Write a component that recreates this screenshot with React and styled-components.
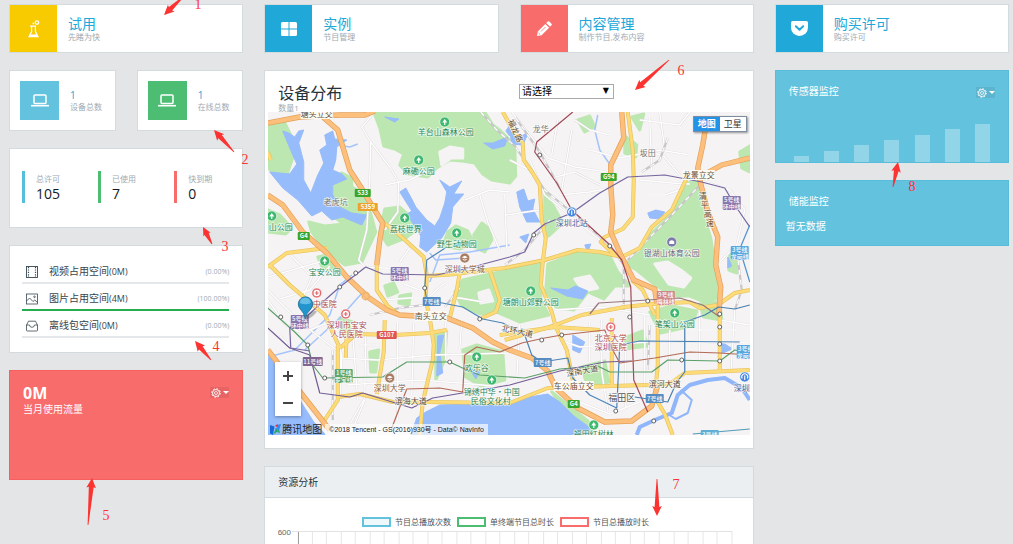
import React from "react";
import styled, { createGlobalStyle } from "styled-components";

const GlobalStyle = createGlobalStyle`
  *, *::before, *::after { box-sizing: border-box; }
  body {
    margin: 0;
    background: #e4e5e6;
    color: #263238;
    font-family: "Open Sans", "Noto Sans CJK SC", sans-serif;
    font-size: 10px;
    line-height: 14px;
  }
  button, select { font: inherit; color: inherit; margin: 0; padding: 0; border: 0; }
  svg { display: block; }
`;

const colors = {
  blue: "#20a8d8",
  sky: "#63c2de",
  green: "#4dbd74",
  red: "#f86c6b",
  yellow: "#f8cb00",
  muted: "#9eaab3",
  border: "#d3dbdf",
};

/* ---------- layout ---------- */

const Page = styled.div`
  position: relative;
  height: 100vh;
  overflow: hidden;
  padding: 4px 4px 0 9px;
`;
const TopRow = styled.nav`
  display: grid;
  grid-template-columns: repeat(4, 1fr);
  gap: 21px;
  margin-bottom: 17px;
`;
const Columns = styled.main`
  display: grid;
  grid-template-columns: repeat(4, 1fr);
  gap: 21px;
  align-items: start;
`;
const Column = styled.div`
  display: flex;
  flex-direction: column;
  gap: 17px;
  min-width: 0;
  grid-column: span ${(p) => p.$span || 1};
`;
const Card = styled.section`
  background: #fff;
  border: 1px solid ${colors.border};
`;

/* ---------- top tiles ---------- */

const Tile = styled.a`
  display: flex;
  background: #fff;
  border: 1px solid ${colors.border};
  color: inherit;
  text-decoration: none;
`;
const TileIcon = styled.span`
  display: flex;
  flex: none;
  width: 47px;
  align-items: center;
  justify-content: center;
  background: ${(p) => p.$color};
`;
const TileText = styled.span`
  display: block;
  padding: 10px 11px 11px;
`;
const TileTitle = styled.span`
  display: block;
  font-size: 14px;
  line-height: 17px;
  color: ${colors.blue};
`;
const Caption = styled.span`
  display: block;
  font-size: 8px;
  line-height: ${(p) => p.$line || 9}px;
  color: ${colors.muted};
  white-space: nowrap;
`;

/* ---------- left column ---------- */

const MiniRow = styled.div`
  display: grid;
  grid-template-columns: 1fr 1fr;
  gap: 21px;
`;
const Mini = styled(Card)`
  display: flex;
  align-items: center;
  gap: 11px;
  padding: 10px;
`;
const MiniIcon = styled.span`
  display: flex;
  flex: none;
  width: 39px;
  height: 39px;
  align-items: center;
  justify-content: center;
  background: ${(p) => p.$color};
`;
const MiniValue = styled.span`
  display: block;
  line-height: 12px;
  color: ${colors.blue};
`;
const Stats = styled(Card)`
  display: grid;
  grid-template-columns: repeat(3, 1fr);
  gap: 21px;
  padding: 22px 13px 24px 12px;
`;
const Stat = styled.div`
  border-left: 3px solid ${(p) => p.$color};
  padding: 2px 0 0 11px;
`;
const StatValue = styled.span`
  display: block;
  font-size: 14px;
  line-height: 18px;
  color: #151b1e;
`;
const Storage = styled(Card)`
  display: flex;
  flex-direction: column;
  gap: 4px;
  padding: 15px 13px 14px 12px;
`;
const StorageHead = styled.div`
  display: flex;
  align-items: center;
  height: 21px;
  padding-left: 4px;
`;
const StorageName = styled.span`
  flex: 1;
  margin-left: 11px;
  color: #37444b;
  small { font-size: 9px; }
`;
const StoragePercent = styled.span`
  font-size: 7px;
  color: ${colors.muted};
`;
const Track = styled.div`
  height: 2px;
  background: #e4e8eb;
`;
const Fill = styled.div`
  height: 2px;
  background: #26ad4e;
`;

/* ---------- coloured panels ---------- */

const Panel = styled.section`
  background: ${(p) => p.$color};
  border: 1px solid ${(p) => p.$edge};
  color: #fff;
`;
const PanelHead = styled.div`
  display: flex;
  justify-content: space-between;
  align-items: flex-start;
  padding: 13px 13px 0;
`;
const TrafficPanel = styled(Panel)`
  min-height: 110px;
`;
const TrafficValue = styled.div`
  font-size: 16px;
  line-height: 19px;
  font-weight: 700;
`;
const TrafficLabel = styled.div`
  line-height: 12px;
`;
const PanelTitle = styled.h2`
  margin: 0;
  font-size: 10px;
  line-height: 14px;
  font-weight: 400;
`;
const MenuButton = styled.button`
  display: flex;
  align-items: center;
  justify-content: center;
  gap: 2px;
  width: 19px;
  height: 11px;
  margin-top: 3px;
  background: rgba(0, 0, 0, 0.07);
  color: #fff;
`;
const Caret = styled.span`
  border: 3px solid transparent;
  border-top-color: #fff;
  border-bottom: 0;
`;
const Bars = styled.div`
  display: flex;
  justify-content: space-between;
  align-items: flex-end;
  height: 38px;
  margin: 26px 18px 0;
`;
const Bar = styled.span`
  width: 15px;
  background: rgba(255, 255, 255, 0.3);
`;
const EmptyText = styled.p`
  margin: 0;
  padding: 11px 10px 12px;
`;

/* ---------- device map ---------- */

const MapCard = styled(Card)`
  padding: 12px 3px 13px;
`;
const MapHead = styled.div`
  display: grid;
  grid-template-columns: 1fr 1fr;
  gap: 20px;
  padding: 0 10px;
`;
const MapTitle = styled.h1`
  margin: 0;
  font-size: 16px;
  line-height: 20px;
  font-weight: 400;
`;
const SelectBox = styled.label`
  position: relative;
  display: block;
  justify-self: start;
  width: 95px;
  height: 15px;
  margin-top: 1px;
  color: #000;
`;
const Select = styled.select`
  appearance: none;
  width: 100%;
  height: 15px;
  padding: 0 2px;
  background: #fff;
  border: 1px solid #a9a9a9;
  border-radius: 0;
  line-height: 13px;
`;
const SelectArrow = styled.span`
  position: absolute;
  right: 5px;
  top: 0;
  font-family: "DejaVu Sans", sans-serif;
  font-size: 8px;
  line-height: 14px;
  pointer-events: none;
`;
const MapArea = styled.div`
  position: relative;
  height: 323px;
  overflow: hidden;
  background: #f5f3f4;
`;
const MapSwitch = styled.div`
  position: absolute;
  top: 4px;
  right: 3px;
  display: flex;
  border: 1px solid #7d8ea3;
  box-shadow: 1px 1px 2px rgba(0, 0, 0, 0.4);
`;
const SwitchButton = styled.button`
  width: 26px;
  height: 14px;
  font-size: 9px;
  line-height: 14px;
  font-weight: ${(p) => (p.$active ? 700 : 400)};
  background: ${(p) => (p.$active ? "#2492e6" : "#fff")};
  color: ${(p) => (p.$active ? "#fff" : "#333")};
`;
const ZoomControl = styled.div`
  position: absolute;
  left: 7px;
  bottom: 19px;
  background: #fff;
  box-shadow: 0 1px 3px rgba(0, 0, 0, 0.35);
`;
const ZoomButton = styled.button`
  display: flex;
  align-items: center;
  justify-content: center;
  width: 26px;
  height: 27px;
  background: #fff;
`;
const MapCredit = styled.div`
  position: absolute;
  left: 2px;
  bottom: 0;
  display: flex;
  align-items: center;
  gap: 1px;
  color: #222;
  line-height: 11px;
  height: 11px;
`;
const Copyright = styled.span`
  margin-left: 2px;
  padding: 0 4px;
  background: rgba(255, 255, 255, 0.65);
  font-family: "Liberation Sans", "Noto Sans CJK SC", sans-serif;
  font-size: 7px;
  white-space: nowrap;
`;

/* ---------- chart ---------- */

const ChartHead = styled.header`
  padding: 8px 13px;
  background: #ebeff1;
  border-bottom: 1px solid ${colors.border};
`;
const ChartBody = styled.div`
  padding: 18px 20px 13px 13px;
`;
const Legend = styled.ul`
  display: flex;
  justify-content: center;
  gap: 6px;
  margin: 0;
  padding: 0;
  list-style: none;
  font-size: 8px;
  line-height: 11px;
  color: #555;
`;
const LegendItem = styled.li`
  display: flex;
  align-items: center;
  gap: 4px;
  &::before {
    content: "";
    width: 29px;
    height: 10px;
    border: 2px solid ${(p) => p.$color};
    background: ${(p) => p.$fill};
  }
`;
const Notes = styled.svg`
  position: absolute;
  inset: 0;
  width: 100%;
  height: 100%;
  pointer-events: none;
`;

/* ---------- icons ---------- */

const FlaskIcon = () => (
  <svg width="12" height="18" viewBox="0 0 12 18" fill="none" stroke="#fff" strokeWidth="1.2">
    <path d="M2 6.2h6M3.600 6.400v5.200L1 16.600h9L7.400 11.600V6.400" />
    <path d="M2.500 14.600h6l1.200 2H1.300z" fill="#fff" stroke="none" />
    <circle cx="9" cy="2.600" r="1.700" /><circle cx="5.400" cy="3.400" r=".9" fill="#fff" stroke="none" />
  </svg>
);
const WindowsIcon = () => (
  <svg width="16" height="14" viewBox="0 0 16 14" fill="#fff">
    <path d="M1.5 0h6v6.5H0v-5Q0 0 1.5 0zM8.5 0h6Q16 0 16 1.5v5H8.500zM0 7.500h7.500V14h-6Q0 14 0 12.500zM8.500 7.500H16v5Q16 14 14.500 14h-6z" />
  </svg>
);
const PencilIcon = () => (
  <svg width="16" height="16" viewBox="0 0 16 16" fill="#fff">
    <path d="M1 15l.8-4.600L9.300 2.900l3.800 3.800-7.500 7.500zM10.200 2l1.500-1.500q.8-.7 1.600 0l2.200 2.200q.7.8 0 1.600L14 5.800z" />
    <path d="M2.600 12l1.400 1.400M5 10.500l4.500-4.500" stroke={colors.red} strokeWidth=".8" fill="none" />
  </svg>
);
const PocketIcon = () => (
  <svg width="17" height="15" viewBox="0 0 17 15">
    <path d="M1.700 0h13.600Q17 0 17 1.700v4.800a8.500 8.500 0 0 1-17 0V1.700Q0 0 1.700 0z" fill="#fff" />
    <path d="M4.800 5.200l3.700 3.600 3.700-3.600" fill="none" stroke={colors.blue} strokeWidth="1.900" strokeLinecap="round" strokeLinejoin="round" />
  </svg>
);
const LaptopIcon = () => (
  <svg width="18" height="13" viewBox="0 0 18 13" fill="none" stroke="#fff">
    <rect x="3" y="1" width="12" height="8.500" rx="1" strokeWidth="1.500" />
    <path d="M0 11.700h18" strokeWidth="1.600" />
  </svg>
);
const GearIcon = () => (
  <svg width="10" height="10" viewBox="0 0 10 10" fill="none" stroke="#fff">
    <circle cx="5" cy="5" r="3.500" strokeWidth=".9" />
    <circle cx="5" cy="5" r="1.500" strokeWidth=".8" />
    <circle cx="5" cy="5" r="4.300" strokeWidth="1" strokeDasharray="1.500 1.877" />
  </svg>
);
const FilmIcon = () => (
  <svg width="12" height="12" viewBox="0 0 12 12" fill="none" stroke="#37474f" strokeWidth=".9">
    <rect x=".5" y=".5" width="11" height="11" /><path d="M2.500 1v10M9.500 1v10" strokeDasharray="1.200 1.200" strokeWidth="1.200" />
  </svg>
);
const PictureIcon = () => (
  <svg width="12" height="12" viewBox="0 0 12 12" fill="none" stroke="#37474f" strokeWidth=".8">
    <rect x=".5" y="1" width="11" height="10" /><path d="M.6 8l3-3 3.400 3.500 1.800-1.500 2.600 2.400" /><circle cx="8.500" cy="3.800" r=".8" />
  </svg>
);
const InboxIcon = () => (
  <svg width="12" height="12" viewBox="0 0 12 12" fill="none" stroke="#37474f" strokeWidth=".8">
    <path d="M.5 5L2.500 1.200h7L11.500 5v5.300q0 .7-.7.7H1.200q-.7 0-.7-.7zM.5 5H3.500q.3 2.300 2.500 2.300T8.500 5h3" />
  </svg>
);
const MapLogo = () => (
  <svg width="11" height="11" viewBox="0 0 11 11">
    <path d="M0 1l4.500 1.500L3 11 0 9.500z" fill="#1769d8" /><path d="M3.500 10.500L6 4l2 3z" fill="#21a65a" />
    <path d="M4.500 4.500L7.500 4 7 1l4-1-2 6.500z" fill="#2f8df5" /><path d="M5 1.500L8 0 7.500 4z" fill="#e03c3c" /><path d="M7 8l2-2.500L10 9z" fill="#21a65a" />
  </svg>
);

/* ---------- map drawing ---------- */

const parks = [
  "374,112 380,128 384,146 395,149 404,154 400,165 408,174 428,177 437,168 450,160 462,161 475,163 483,174 492,180 510,183 516,176 515,145 500,130 493,125 485,112",
  "268,124 284,121 291,135 294,155 288,172 296,190 268,168",
  "322,190 330,183 342,173 352,178 352,187 362,192 371,214 376,232 362,262 345,265 335,257 322,246 312,232 309,222 325,226 344,224 330,214",
  "318,257 332,254 337,268 324,271", "268,210 280,215 292,228 286,234 268,232",
  "385,209 400,207 409,215 420,227 406,238 388,245 380,233",
  "443,246 448,232 456,226 468,231 474,243 460,249", "474,235 482,223 490,229 492,240 485,252 476,248",
  "455,292 463,280 490,274 541,264 541,300 549,315 520,322 497,312 480,314 462,306",
  "548,264 580,252 610,256 618,272 630,286 615,286 604,299 588,292 574,310 556,307 546,290",
  "684,183 700,182 704,215 711,238 716,270 719,298 705,302 690,296 672,296 653,283 637,270 626,264 642,251 653,232 672,214",
  "545,190 553,205 563,223 549,236 545,220", "650,312 672,306 697,311 692,326 661,333", "625,338 643,331 648,346 626,349",
  "582,367 605,361 609,382 588,388", "463,350 477,345 503,352 505,380 481,386 466,377", "436,333 447,331 445,360 436,380",
  "740,152 750,146 750,172 742,168", "700,304 720,302 722,320 704,317", "578,120 590,116 595,127 585,132", "632,117 644,114 640,130",
  "625,136 637,145 636,157 625,153", "552,392 567,404 588,421 595,435 586,435 570,418", "385,286 394,283 398,292 388,296",
  "400,296 411,294 409,305 399,303", "340,318 353,322 355,330 342,331", "370,352 379,350 376,372 371,372", "730,255 736,250 737,273 729,270",
];
const patches = [
  "440,152 450,147 463,149 463,158 451,158 442,165", "655,264 668,262 681,270 691,278 684,287 669,284",
  "479,293 489,290 493,301 481,303", "575,279 590,276 598,288 584,291", "304,150 312,140 320,150 313,160",
];
const waters = [
  "270,172 290,174 297,164 290,148 283,131 289,133 295,137 299,131 304,130 299,143 304,162 304,180 311,193 318,175 324,163 320,150 327,145 325,135 333,131 335,139 347,140 337,147 336,160 333,170 342,174 347,179 333,185 333,195 340,207 352,213 367,215 362,225 343,217 332,220 322,211 312,216 298,200 283,188",
  "400,192 406,188 412,199 416,207 427,220 435,226 440,218 445,203 447,192 440,180 450,187 462,181 454,194 464,194 453,207 451,223 442,238 427,252 420,247 421,236 411,220 404,216 412,211",
  "268,351 275,360 290,384 305,408 314,422 326,435 268,435",
  "411,435 417,418 426,412 440,405 505,403 524,398 548,394 560,402 574,416 588,426 592,435",
  "517,192 524,189 528,201 535,199 533,209 540,222 527,222 520,207", "551,288 568,290 576,286 588,291 583,299 567,296",
  "648,213 656,210 665,212 660,219 650,218", "510,131 520,137 529,132 523,145 512,144", "520,237 529,234 526,243", "728,257 732,266 728,268",
  "573,335 585,342 580,353 573,350", "484,143 493,143 508,137 505,146 493,149", "438,336 444,335 440,353 443,373 437,376",
  "506,131 513,121 510,136", "385,117 399,119 395,122", "585,245 591,244 588,252", "470,369 480,372 476,379", "722,342 733,349 720,354",
];
const streets = [
  "375,112 362,127 371,142 390,167 399,182 398,212 385,230", "371,142 370,180 367,230 359,260 365,267 405,269",
  "268,290 300,322 342,354 342,380", "268,300 286,325 300,332", "383,300 410,298 460,298 483,302", "340,358 378,360 433,355 510,353",
  "347,385 420,380 460,383 504,387", "404,284 420,290 425,290", "398,322 398,420", "414,323 412,395", "352,322 358,400", "366,330 365,398 344,435",
  "330,266 310,290 280,299", "268,277 320,262", "290,254 312,277 300,305", "341,348 341,402", "365,400 355,424 385,430",
  "446,322 446,360", "462,320 460,350", "520,325 517,380 502,388", "555,310 600,307 650,315", "560,340 580,347 660,341 750,343",
  "590,322 590,362", "602,320 602,372 608,410", "626,346 626,407", "645,315 645,400", "670,330 670,372", "684,330 740,330", "700,312 700,362",
  "735,310 731,375", "600,390 645,390", "580,402 610,414 640,402", "512,112 530,135 548,158 575,167 607,172", "530,160 545,195 590,232 610,248",
  "552,178 575,172 600,185", "640,180 672,183 690,184", "645,195 665,195 680,190", "642,148 665,157 680,175", "700,180 730,190 745,210 737,245 720,262",
  "720,320 750,325", "506,215 540,210", "560,195 590,192 610,188", "575,120 590,130 610,135", "590,150 620,158 660,150 690,155", "650,118 652,170", "558,120 552,155",
  "572,130 562,190", "640,120 680,125 690,112", "660,112 665,150", "510,160 530,170", "385,185 410,180 430,170", "465,200 490,190 510,192",
  "480,195 488,222 500,250", "505,195 507,248", "410,248 400,262", "445,283 430,296", "360,345 380,345", "310,330 330,322", "280,335 292,350",
];
const yellowRoads = [
  "503,112 512,128 523,143 524,160 533,173 540,185 542,220 546,238 543,262 541,285 552,312 556,327 567,350 573,380",
  "628,112 633,150 634,180 633,217 623,229 605,237 601,242 612,252 622,257", "687,178 672,210 652,227 640,248 622,257 600,252 578,250 545,260 505,268 460,273 457,290 450,318",
  "386,224 393,229 424,257 427,275 426,300 430,318 434,345 433,360 423,402 420,435", "460,273 490,270 500,300 496,312 482,318", "268,267 287,253 327,248",
  "270,265 290,285 325,315 340,348", "340,348 357,334 395,335 430,333 447,330", "377,263 377,290 388,306 400,315", "385,320 384,352 377,394", "338,346 338,400 323,423",
  "338,397 360,394 393,402 427,402 510,403 548,388 612,386 648,385 670,384 685,373 750,370", "505,340 553,326 582,315 625,307 652,304 690,302 700,308 718,305 735,293 750,290",
  "612,318 612,385", "658,303 658,365 655,397 665,414 673,435", "720,305 720,370", "268,152 271,160", "427,276 457,274", "632,280 643,290 655,315", "347,330 346,358",
  "500,335 555,327 600,330",
];
const orangeRoads = [
  "268,123 300,117 340,115 365,115 375,111", "322,116 338,130 344,150 350,170 361,187 373,207 383,223 380,240 377,265",
  "268,195 283,205 303,232 327,253 347,277 368,297 387,310 400,315 447,318 473,328 493,342 510,350 532,358 548,371 556,388 578,408 605,422 632,421 652,406 658,385",
  "622,112 624,138 611,165 611,185 613,215 611,232 622,257 634,280 655,289 657,303", "707,120 703,145 698,168 701,184 708,212 718,237 716,265 721,287 719,315",
  "698,178 722,165 750,158", "268,350 288,376 330,430",
];
const rails = [
  "481,112 497,130 515,146 545,190 575,215 610,245 624,265 624,310", "703,182 672,215 628,260", "516,118 540,152 560,188", "333,350 333,420",
  "668,138 660,160 642,172", "424,305 400,308 370,315", "460,288 445,307", "737,250 742,290 735,310", "550,220 525,250 505,265", "650,325 648,370",
];
const metros = [
  ["#a14957", "573,112 537,142 535,152 557,183 572,210 608,243 622,260 631,287 632,320 634,380 648,412"],
  ["#75659f", "306,317 340,287 366,267 383,274 437,275 465,269 510,257 525,252 534,233 545,224 572,213 600,193 628,177 665,175 702,182 725,188 735,205 750,227"],
  ["#4b84b8", "447,247 427,260 425,288 427,300 463,307 483,319 503,323 525,335 532,355 542,362 568,358 573,378 590,395 617,408 620,345 640,341 740,342"],
  ["#5ba069", "268,308 295,332 308,345 313,365 323,378 383,377 407,362 450,362 467,370 480,375 525,378 560,369 598,366 610,372 652,372 668,360 720,361 735,350 750,353"],
  ["#735d96", "268,328 290,348 310,355 320,393 350,397 363,393 412,408 433,398 510,385 560,371 605,362 632,361"],
  ["#b36a57", "392,428 407,389 440,388 463,392 465,355 477,347 500,352 522,343 545,338 562,335 605,330 612,348 620,363 655,358 690,352 720,353 750,355"],
  ["#987579", "590,314 599,303 648,300 680,298 703,305 720,317"],
  ["#477fae", "635,397 668,402 677,382 685,372 685,322 705,315 719,307 735,309 750,305"],
  ["#75659f", "303,317 290,328 291,348 310,351"], ["#4f91cd", "750,225 740,249 750,282"], ["#529ab8", "693,434 750,429"],
];
const stations = [[340,287],[356,273],[425,288],[281,317],[308,345],[325,378],[450,362],[480,319],[542,340],[562,335],[534,235],[572,213],[610,246],[648,301],[682,360],[720,361],[720,344],[720,327],[720,314],[616,411],[654,421],[630,317],[540,155],[746,390]];
const greenText = "#278657";
const labels = [
  ["塘头立交", 317, 114, "road"], ["羊台山森林公园", 446, 132, greenText], ["麻磡公园", 419, 171, greenText], ["老虎坑", 336, 202, "#74776f"],
  ["山公园", 281, 227, greenText], ["荔枝世界", 406, 229, greenText], ["野生动物园", 457, 244, greenText], ["深圳大学城", 465, 269, "#86614d"],
  ["宝安公园", 325, 272, greenText], ["中医院", 325, 304, "#ad5056"], ["深圳市宝安", 347, 325, "#ad5056"], ["人民医院", 347, 334, "#ad5056"],
  ["南头立交", 431, 316, "road"], ["深圳大学", 390, 388, "#86614d"], ["滨海大道", 411, 401, "#604b34"], ["欢乐谷", 477, 368, greenText],
  ["锦绣中华·中国", 492, 392, greenText], ["民俗文化村", 491, 401, greenText], ["龙华", 541, 129, "#777"], ["坂田", 648, 153, "#777"],
  ["龙景立交", 699, 175, "road"], ["深圳北站", 572, 223, "#396aa6"], ["银湖山体育公园", 672, 253, "#6b6886"], ["塘朗山郊野公园", 531, 302, greenText],
  ["笔架山公园", 675, 324, greenText], ["北京大学", 611, 338, "#ad5056"], ["深圳医院", 611, 347, "#ad5056"], ["滨河大道", 665, 384, "#604b34"],
  ["车公庙立交", 574, 386, "road"], ["福田区", 622, 398, "#555"], ["福田红树林", 594, 434, greenText], ["深圳", 742, 388, "#396aa6"],
];
const badges = [
  ["5号线", "环中线", 400, 274, "#8976ad"], ["5号线", "环中线", 300, 322, "#8976ad"], ["5号线", "环中线", 732, 203, "#8976ad"],
  ["1号线", "罗宝线", 344, 376, "#5ca76c"], ["9号线", "梅林线", 666, 298, "#cf8689"], ["3号线", "龙岗线", 740, 253, "#58a7df"],
  ["3号线", "龙岗线", 746, 352, "#58a7df"], ["11号线", "", 313, 361, "#80658f"], ["7号线", "", 432, 301, "#568bc1"],
  ["7号线", "", 543, 362, "#568bc1"], ["7号线", "", 655, 398, "#568bc1"], ["3号线", "", 710, 434, "#61aed4"],
];
const shields = [["S33", 363, 193, "#39a52c"], ["S359", 368, 207, "#eaa42d"], ["G4", 304, 236, "#39a52c"], ["G94", 609, 177, "#39a52c"], ["G4", 574, 404, "#39a52c"], ["G107", 387, 335, "#df5455"]];
const places = [
  ["park", 445, 122], ["park", 419, 160], ["park", 272, 216], ["park", 405, 218], ["park", 457, 233], ["park", 325, 261], ["park", 531, 291],
  ["park", 675, 313], ["park", 477, 357], ["park", 492, 380], ["park", 594, 425], ["hospital", 317, 293], ["hospital", 346, 314], ["hospital", 611, 327],
  ["school", 465, 258], ["school", 390, 378], ["sport", 672, 242], ["station", 572, 212], ["station", 745, 377],
];
const placeColors = { park: "#3fb86f", hospital: "#df6b70", school: "#a97c63", sport: "#7c7aa8", station: "#4485e0" };

const Lines = ({ list, stroke, width, ...rest }) =>
  list.map((points, i) => <polyline key={i} points={points} fill="none" stroke={stroke} strokeWidth={width} strokeLinejoin="round" {...rest} />);

const Place = ({ type, x, y }) => (
  <g transform={`translate(${x} ${y})`}>
    <circle r="5" fill={placeColors[type]} stroke="#fff" strokeWidth=".6" />
    {type === "park" && <path d="M0-3L2.500.5H.6V3H-.6V.5H-2.500z" fill="#fff" />}
    {type === "hospital" && <g><circle r="3.200" fill="#fff" /><path d="M0-2V2M-2 0H2" stroke={placeColors.hospital} strokeWidth="1.200" /></g>}
    {type === "school" && <g><path d="M-3-.800L0-2.200 3-.800 0 .600z" fill="#fff" /><path d="M-2 1.400q2 1.500 4 0" stroke="#fff" fill="none" /></g>}
    {type === "sport" && <path d="M-2.500 2V-.5Q0-3 2.500-.5V2z" fill="#fff" />}
    {type === "station" && <path d="M-2.500 1.500A3 3 0 1 1 2.500 1.500M0-1.500V3" stroke="#fff" strokeWidth="1.100" fill="none" />}
  </g>
);

const CityMap = () => (
  <svg width="100%" height="100%" viewBox="268 112 482 323" preserveAspectRatio="xMidYMid slice" role="img" aria-label="设备分布地图" fontFamily='"Noto Sans CJK SC", sans-serif'>
    <rect x="268" y="112" width="482" height="323" fill="#f5f3f4" />
    {parks.map((p) => <polygon key={p} points={p} fill="#bce7b0" stroke="#bce7b0" strokeWidth="3" strokeLinejoin="round" />)}
    {patches.map((p) => <polygon key={p} points={p} fill="#f5f3f4" stroke="#f5f3f4" strokeWidth="3" strokeLinejoin="round" />)}
    {waters.map((p) => <polygon key={p} points={p} fill="#97bcfb" stroke="#97bcfb" strokeWidth="1" strokeLinejoin="round" />)}
    <Lines list={["637,435 640,427 655,420 672,413 678,395 690,385 708,380 725,378 742,388 750,400"]} stroke="#8fb5fb" width="4" />
    <Lines list={["681,390 692,400 688,413 676,419 668,414"]} stroke="#8fb5fb" width="2" />
    <Lines list={["268,357 295,350 330,315 340,285 352,275", "430,282 440,255 470,252 510,245", "305,350 340,318 365,290", "337,145 350,147 358,144", "598,115 595,130 600,150 612,167", "430,253 436,260 465,258"]} stroke="#a4c4fb" width="1.500" />
    <Lines list={streets} stroke="#dcd8db" width="2.200" />
    <Lines list={streets} stroke="#fff" width="1.400" />
    <Lines list={rails} stroke="#c9c6ca" width="2.200" />
    <Lines list={rails} stroke="#fff" width="1.200" strokeDasharray="5 5" />
    <Lines list={yellowRoads} stroke="#e5c05c" width="4" />
    <Lines list={yellowRoads} stroke="#fcdb78" width="2.800" />
    <Lines list={orangeRoads} stroke="#e4a05a" width="5.400" />
    <Lines list={orangeRoads} stroke="#fcc07c" width="4" />
    <circle cx="366" cy="296" r="3.500" fill="none" stroke="#f1b46c" strokeWidth="1.800" />
    {metros.map(([c, p]) => <polyline key={p} points={p} fill="none" stroke={c} strokeWidth="1.200" strokeLinejoin="round" />)}
    {stations.map(([x, y]) => <circle key={`${x}-${y}`} cx={x} cy={y} r="2" fill="#fff" stroke="#555" strokeWidth=".9" />)}
    {places.map(([t, x, y]) => <Place key={`${x}-${y}`} type={t} x={x} y={y} />)}
    {badges.map(([a, b, x, y, c]) => (
      <g key={`${x}-${y}`} fontSize="6" fontWeight="500" fill="#fff" textAnchor="middle">
        <rect x={x - (a.length > 3 ? 10 : 9)} y={y - (b ? 7 : 4)} width={a.length > 3 ? 20 : 18} height={b ? 14 : 9} rx="1" fill={c} />
        <text x={x} y={b ? y - 1 : y + 3}>{a}</text>
        {b && <text x={x} y={y + 6}>{b}</text>}
      </g>
    ))}
    {shields.map(([t, x, y, c]) => (
      <g key={`${x}-${y}`}>
        <rect x={x - (t.length * 2 + 2)} y={y - 4} width={t.length * 4 + 4} height="8" rx="1" fill={c} />
        <text x={x} y={y + 2} fontSize="6" fontWeight="700" fill="#fff" textAnchor="middle">{t}</text>
      </g>
    ))}
    {labels.map(([t, x, y, c]) => (
      <g key={`${t}-${x}`} textAnchor="middle">
        {c === "road" && <rect x={x - t.length * 4} y={y - 5} width={t.length * 8} height="10" fill="#fdf9ec" />}
        <text x={x} y={y + 3} fontSize={t === "福田区" ? 9 : 8} fill={c === "road" ? "#604b34" : c} stroke="#fff" strokeWidth="1.500" strokeOpacity=".7" paintOrder="stroke">{t}</text>
      </g>
    ))}
    <g fontSize="8" fill="#604b34" stroke="#fff" strokeWidth="1.500" strokeOpacity=".7" paintOrder="stroke" textAnchor="middle">
      <text transform="translate(517 334) rotate(12)">北环大道</text>
      <text transform="translate(583 374) rotate(-10)">深南大道</text>
      <text transform="translate(513 132) rotate(65)">福龙路</text>
      <text x="703" y="199">清</text><text x="705" y="208">平</text><text x="708" y="217">高</text><text x="710" y="226">速</text>
    </g>
    <g>
      <ellipse cx="311" cy="315" rx="7" ry="2" fill="#000" opacity=".25" transform="rotate(-35 311 315)" />
      <path d="M305.500 319Q304.500 313 300.500 309A7.200 7.200 0 1 1 311 309Q306.500 313 305.500 319z" fill="#2295cd" stroke="#17678f" strokeWidth=".8" />
      <path d="M300 303a5.500 5.500 0 0 1 11 0q-5 2.500-11 0z" fill="#65bce4" />
    </g>
  </svg>
);

/* ---------- annotations ---------- */

const notes = [
  { n: 1, tip: [164, 15], tail: [184, -4], at: [198, 9] },
  { n: 2, tip: [214, 130], tail: [234, 152], at: [245, 164] },
  { n: 3, tip: [203, 227], tail: [212, 244], at: [225, 251] },
  { n: 4, tip: [195, 341], tail: [211, 360], at: [216, 351] },
  { n: 5, tip: [92, 478], tail: [88, 525], at: [106, 520] },
  { n: 6, tip: [635, 90], tail: [669, 60], at: [681, 75] },
  { n: 7, tip: [657, 516], tail: [657, 479], at: [676, 489] },
  { n: 8, tip: [898, 162], tail: [893, 187], at: [912, 191] },
];
const arrowPoints = ([x, y], [tx, ty]) => {
  const length = Math.hypot(tx - x, ty - y);
  const [ux, uy] = [(tx - x) / length, (ty - y) / length];
  const head = Math.min(10, length * 0.45);
  const spot = (along, side) => `${x + ux * along - uy * side},${y + uy * along + ux * side}`;
  return [spot(0, 0), spot(head, head * 0.48), spot(head - 1, 2.4), spot(length, 0.4), spot(length, -0.4), spot(head - 1, -2.4), spot(head, -head * 0.48)].join(" ");
};
const Annotations = () => (
  <Notes fill="#fb3431" fontFamily='"Liberation Serif", serif' fontSize="14" textAnchor="middle">
    {notes.map(({ n, tip, tail, at }) => (
      <g key={n}>
        <polygon points={arrowPoints(tip, tail)} />
        <text x={at[0]} y={at[1]}>{n}</text>
      </g>
    ))}
  </Notes>
);

/* ---------- page ---------- */

const tiles = [
  { title: "试用", text: "先睹为快", color: colors.yellow, Icon: FlaskIcon },
  { title: "实例", text: "节目管理", color: colors.blue, Icon: WindowsIcon },
  { title: "内容管理", text: "制作节目,发布内容", color: colors.red, Icon: PencilIcon },
  { title: "购买许可", text: "购买许可", color: colors.blue, Icon: PocketIcon },
];
const storage = [
  { name: "视频占用空间", size: "(0M)", label: "(0.00%)", percent: 0, Icon: FilmIcon },
  { name: "图片占用空间", size: "(4M)", label: "(100.00%)", percent: 100, Icon: PictureIcon },
  { name: "离线包空间", size: "(0M)", label: "(0.00%)", percent: 0, Icon: InboxIcon },
];
const sensorBars = [6, 11, 17, 22, 27, 33, 38];

const SettingsButton = () => (
  <MenuButton type="button" aria-label="设置"><GearIcon /><Caret /></MenuButton>
);

const ResourceChart = () => (
  <svg width="100%" viewBox="0 0 456 140" role="img" aria-label="资源分析图表">
    <text x="13" y="8" textAnchor="end" fontFamily='"Liberation Sans", sans-serif' fontSize="8" fill="#666">600</text>
    <path d="M14 4.500H456" stroke="#e2e2e2" />
    {Array.from({ length: 30 }, (_, i) => (
      <path key={i} d={`M${Math.round(20 + (i + 1) * 14.52) - 0.5} 5V140`} stroke="#e6e6e6" />
    ))}
    <path d="M20.500 5V140" stroke="#999" />
  </svg>
);

export default function App() {
  return (
    <Page>
      <GlobalStyle />
      <TopRow>
        {tiles.map(({ title, text, color, Icon }) => (
          <Tile key={title} href="#">
            <TileIcon $color={color}><Icon /></TileIcon>
            <TileText><TileTitle>{title}</TileTitle><Caption>{text}</Caption></TileText>
          </Tile>
        ))}
      </TopRow>
      <Columns>
        <Column>
          <MiniRow>
            <Mini>
              <MiniIcon $color={colors.sky}><LaptopIcon /></MiniIcon>
              <div><MiniValue>1</MiniValue><Caption $line={12}>设备总数</Caption></div>
            </Mini>
            <Mini>
              <MiniIcon $color={colors.green}><LaptopIcon /></MiniIcon>
              <div><MiniValue>1</MiniValue><Caption $line={12}>在线总数</Caption></div>
            </Mini>
          </MiniRow>
          <Stats>
            <Stat $color="#56bddc"><Caption $line={12}>总许可</Caption><StatValue>105</StatValue></Stat>
            <Stat $color={colors.green}><Caption $line={12}>已使用</Caption><StatValue>7</StatValue></Stat>
            <Stat $color={colors.red}><Caption $line={12}>快到期</Caption><StatValue>0</StatValue></Stat>
          </Stats>
          <Storage>
            {storage.map(({ name, size, label, percent, Icon }) => (
              <div key={name}>
                <StorageHead>
                  <Icon />
                  <StorageName>{name}<small>{size}</small></StorageName>
                  <StoragePercent>{label}</StoragePercent>
                </StorageHead>
                <Track role="progressbar" aria-label={name} aria-valuenow={percent}>
                  <Fill style={{ width: `${percent}%` }} />
                </Track>
              </div>
            ))}
          </Storage>
          <TrafficPanel $color={colors.red} $edge="#f75f5e">
            <PanelHead>
              <div><TrafficValue>0M</TrafficValue><TrafficLabel>当月使用流量</TrafficLabel></div>
              <SettingsButton />
            </PanelHead>
          </TrafficPanel>
        </Column>

        <Column $span={2}>
          <MapCard>
            <MapHead>
              <div><MapTitle>设备分布</MapTitle><Caption>数量1</Caption></div>
              <SelectBox>
                <Select aria-label="请选择" defaultValue=""><option value="">请选择</option></Select>
                <SelectArrow aria-hidden="true">▼</SelectArrow>
              </SelectBox>
            </MapHead>
            <MapArea>
              <CityMap />
              <MapSwitch>
                <SwitchButton type="button" $active>地图</SwitchButton>
                <SwitchButton type="button">卫星</SwitchButton>
              </MapSwitch>
              <ZoomControl>
                <ZoomButton type="button" aria-label="放大">
                  <svg width="10" height="10" viewBox="0 0 10 10"><path d="M5 0V10M0 5H10" stroke="#444" strokeWidth="2" /></svg>
                </ZoomButton>
                <ZoomButton type="button" aria-label="缩小">
                  <svg width="10" height="10" viewBox="0 0 10 10"><path d="M0 5H10" stroke="#444" strokeWidth="2" /></svg>
                </ZoomButton>
              </ZoomControl>
              <MapCredit>
                <MapLogo />
                <span>腾讯地图</span>
                <Copyright>©2018 Tencent - GS(2016)930号 - Data© NavInfo</Copyright>
              </MapCredit>
            </MapArea>
          </MapCard>
          <Card>
            <ChartHead><PanelTitle>资源分析</PanelTitle></ChartHead>
            <ChartBody>
              <Legend>
                <LegendItem $color="#63c2de" $fill="#eff9fb">节目总播放次数</LegendItem>
                <LegendItem $color="#4dbd74" $fill="#fff">单终端节目总时长</LegendItem>
                <LegendItem $color="#f86c6b" $fill="#fff">节目总播放时长</LegendItem>
              </Legend>
              <ResourceChart />
            </ChartBody>
          </Card>
        </Column>

        <Column>
          <Panel $color={colors.sky} $edge="#57bddb">
            <PanelHead><PanelTitle>传感器监控</PanelTitle><SettingsButton /></PanelHead>
            <Bars>
              {sensorBars.map((h) => <Bar key={h} style={{ height: h }} />)}
            </Bars>
          </Panel>
          <Panel $color={colors.sky} $edge="#57bddb">
            <PanelHead><PanelTitle>储能监控</PanelTitle></PanelHead>
            <EmptyText>暂无数据</EmptyText>
          </Panel>
        </Column>
      </Columns>
      <Annotations />
    </Page>
  );
}
